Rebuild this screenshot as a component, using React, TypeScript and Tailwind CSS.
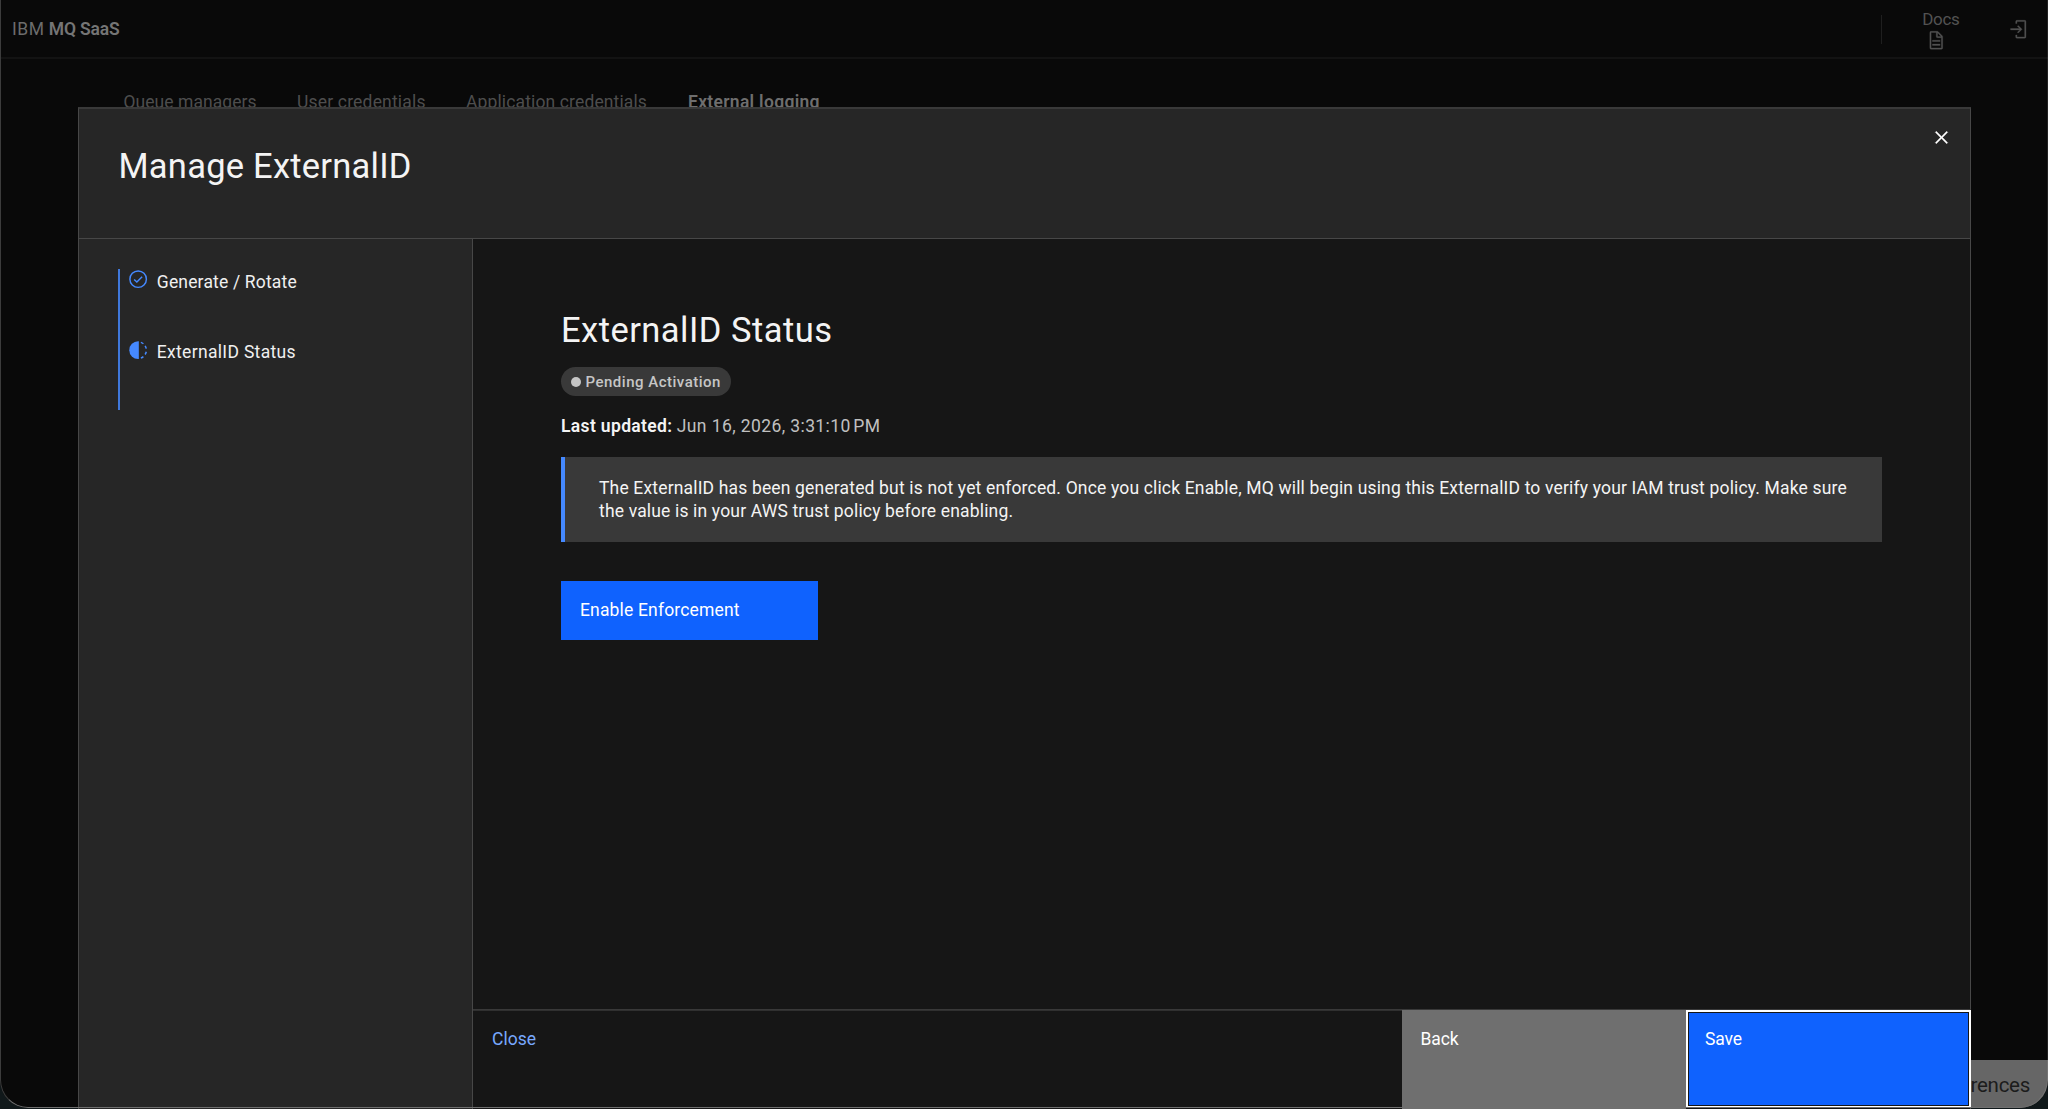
import clsx from "clsx";

const tabs = [
  { label: "Queue managers", className: "w-[173.5px] tracking-[0.05px]" },
  { label: "User credentials", className: "w-[169px] tracking-[0.18px]" },
  { label: "Application credentials", className: "w-[222px] tracking-[0.13px]" },
  { label: "External logging", className: "font-semibold text-[#6e6e6e] tracking-[0.3px]" },
];

// ---------- Icons (32px grid) ----------
function DocumentIcon() {
  return (
    <svg viewBox="0 0 32 32" fill="currentColor" stroke="currentColor" strokeWidth="0.5" className="size-[20.5px]">
      <path d="M25.7 9.3l-7-7A.9.9 0 0018 2H8a2 2 0 00-2 2v24a2 2 0 002 2h16a2 2 0 002-2V10a.9.9 0 00-.3-.7zM18 4.4l5.6 5.6H18zM24 28H8V4h8v6a2 2 0 002 2h6z" />
      <path d="M10 22h12v2H10zM10 16h12v2H10z" />
    </svg>
  );
}

function LoginIcon() {
  return (
    <svg viewBox="0 0 32 32" fill="currentColor" stroke="currentColor" strokeWidth="0.5" className="size-[20.5px]">
      <path d="M26 30H14a2 2 0 01-2-2v-3h2v3h12V4H14v3h-2V4a2 2 0 012-2h12a2 2 0 012 2v24a2 2 0 01-2 2z" />
      <path d="M14.6 20.6L18.2 17H4v-2h14.2l-3.6-3.6L16 10l6 6-6 6z" />
    </svg>
  );
}

function CloseIcon() {
  return (
    <svg viewBox="0 0 32 32" fill="currentColor" stroke="currentColor" strokeWidth="0.4" className="size-[25px]">
      <path d="M17.4 16L24 9.4 22.6 8 16 14.6 9.4 8 8 9.4l6.6 6.6L8 22.6 9.4 24l6.6-6.6 6.6 6.6 1.4-1.4z" />
    </svg>
  );
}

function CompleteIcon() {
  return (
    <svg viewBox="0 0 32 32" fill="none" stroke="currentColor" strokeWidth="2.3" className="size-[20.3px]">
      <circle cx="16" cy="16" r="13" />
      <path d="M9.7 16.4l4.3 4.2 8.3-8.3" />
    </svg>
  );
}

function CurrentIcon() {
  return (
    <svg viewBox="0 0 32 32" fill="currentColor" className="size-[20.3px]">
      <path d="M17 2v28h-1a14 14 0 010-28z" />
      <path
        d="M20.3 3.7a13 13 0 014 2.2M27 9.2a13 13 0 011.8 4.3M28.8 18.5a13 13 0 01-1.8 4.3M24.3 26.1a13 13 0 01-4 2.2"
        fill="none"
        stroke="currentColor"
        strokeWidth="2.4"
      />
    </svg>
  );
}

// ---------- Page behind the tearsheet ----------
function PageHeader() {
  return (
    <header className="flex h-[59px] items-center justify-between border-b-2 border-[#131313] pl-3 pr-5 pt-px">
      <div className="text-[#6c6c6c]">
        <span className="tracking-[0.5px]">IBM</span>{" "}
        <span className="font-semibold tracking-[-0.16px] text-[#757575]">MQ SaaS</span>
      </div>
      <div className="flex items-center text-[#525252]">
        <div className="h-[29px] w-px bg-[#1f1f1f]" />
        <div className="ml-10 flex flex-col items-start">
          <span className="text-[17px] leading-[22px] tracking-[-0.3px]">Docs</span>
          <span className="ml-1">
            <DocumentIcon />
          </span>
        </div>
        <span className="ml-12">
          <LoginIcon />
        </span>
      </div>
    </header>
  );
}

function PageTabs() {
  return (
    <nav className="flex pl-[123.5px] pt-[31px] text-[#4e4e4e]">
      {tabs.map((tab) => (
        <span key={tab.label} className={clsx("whitespace-nowrap", tab.className)}>
          {tab.label}
        </span>
      ))}
    </nav>
  );
}

// ---------- Tearsheet ----------
function Steps() {
  return (
    <aside className="w-[394px] shrink-0 border-r border-[#474747] bg-[#262626] pl-[39px] pt-[30px]">
      <ol className="border-l-2 border-[#3f78dc] text-[#f0f0f0]">
        <li className="flex h-[70.5px] items-start gap-[9px] pl-[7.5px]">
          <span className="text-[#4589ff]">
            <CompleteIcon />
          </span>
          <span className="pt-px tracking-[0.17px]">Generate / Rotate</span>
        </li>
        <li className="flex h-[70.5px] items-start gap-[9px] pl-[7.5px]">
          <span className="pt-[0.5px] text-[#4589ff]">
            <CurrentIcon />
          </span>
          <span className="tracking-[0.32px]">ExternalID Status</span>
        </li>
      </ol>
    </aside>
  );
}

function StatusPanel() {
  return (
    <section className="flex-1 px-[88px] pt-[69px]">
      <h2 className="text-[34.5px] leading-[44px] tracking-[0.47px] text-[#f4f4f4]">ExternalID Status</h2>

      <div className="mt-[15px] flex h-[29px] w-[170px] items-center rounded-full bg-[#393939] pl-[9.5px] text-[15px] font-medium text-[#c6c6c6]">
        <span className="size-2.5 rounded-full bg-[#c6c6c6]" />
        <span className="ml-[5px] tracking-[0.5px]">Pending Activation</span>
      </div>

      <p className="mt-[18px] text-[#c0c0c0]">
        <span className="font-semibold tracking-[0.35px] text-[#f4f4f4]">Last updated:</span>{" "}
        <span className="tracking-[0.4px]">Jun 16, 2026, 3:31:10&#8239;PM</span>
      </p>

      <div className="mt-[19px] h-[84.5px] border-l-4 border-[#4589ff] bg-[#393939] pl-[34px] pt-5 leading-[22.5px] tracking-[0.163px] text-[#f4f4f4]">
        The ExternalID has been generated but is not yet enforced. Once you click Enable, MQ will begin using this
        ExternalID to verify your IAM trust policy. Make sure
        <br />
        the value is in your AWS trust policy before enabling.
      </div>

      <button className="mt-[39.5px] flex h-[58.5px] w-[257px] items-center bg-[#0f62fe] pl-[19px] tracking-[0.16px] text-white">
        Enable Enforcement
      </button>
    </section>
  );
}

function Actions() {
  return (
    <footer className="-mr-px flex h-[100px] border-t border-[#393939]">
      <button className="flex flex-1 items-start border-t border-[#303030] pl-[19px] pt-4 tracking-[0.05px] text-[#78a9ff]">
        Close
      </button>
      <button className="flex w-[284px] items-start bg-[#6f6f6f] pl-[18.5px] pt-[17px] tracking-[-0.1px] text-white">
        Back
      </button>
      <button className="mb-px flex w-[285px] items-start border-2 border-white bg-[#0f62fe] pl-[17px] pt-[15px] tracking-[-0.1px] text-white ring-1 ring-inset ring-[#161616]">
        Save
      </button>
    </footer>
  );
}

function Tearsheet() {
  return (
    <div className="absolute bottom-0 left-[78px] top-[107px] flex w-[1893px] flex-col border-x border-t-2 border-x-[#474747] border-t-[#393939] bg-[#161616]">
      <div className="flex h-[130px] items-start justify-between border-b border-[#474747] bg-[#262626] pl-[39.5px] pr-[16.5px]">
        <h1 className="pt-[35px] text-[34.5px] leading-[44px] tracking-[0.24px] text-[#f4f4f4]">Manage ExternalID</h1>
        <button className="pt-4 text-white">
          <CloseIcon />
        </button>
      </div>
      <div className="flex min-h-0 flex-1">
        <Steps />
        <div className="flex flex-1 flex-col">
          <StatusPanel />
          <Actions />
        </div>
      </div>
    </div>
  );
}

export default function App() {
  return (
    <div className="relative h-[1109px] w-full overflow-hidden bg-[#10181a] font-['Roboto',sans-serif] text-[17.5px] leading-6">
      <div className="h-[1108px] overflow-hidden rounded-b-[28px] bg-[#090909]">
        <PageHeader />
        <PageTabs />
      </div>
      <div className="absolute bottom-px right-0 flex h-[48px] w-[240px] items-center justify-end rounded-br-[28px] bg-[#666666] pr-[18px] pt-0.5 text-[20.5px] tracking-[-0.28px] text-[#1c1c1c]">
        Cookie Preferences
      </div>
      <Tearsheet />
      {/* window outline */}
      <div className="pointer-events-none absolute inset-x-0 bottom-px top-0 rounded-b-[28px] border-x border-b border-b-[#707070] border-l-[#3c3c3c] border-r-white/10" />
    </div>
  );
}
